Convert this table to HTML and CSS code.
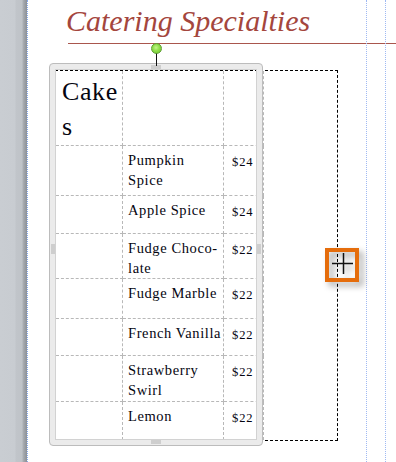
FILE: index.html
```html
<!DOCTYPE html>
<html lang="en">
<head>
<meta charset="utf-8">
<title>Catering Specialties</title>
<link rel="stylesheet" href="styles.css">
</head>
<body>
<div class="app">
  <aside class="gutter"></aside>
  <main class="page">
    <header class="title-wrap">
      <h1 class="title">Catering Specialties</h1>
    </header>
    <div class="rule"></div>

    <div class="textbox">
      <div class="menu">
        <div class="cell head">Cake<br>s</div>
        <div class="cell"></div>
        <div class="cell"></div>

        <div class="cell"></div>
        <div class="cell name">Pumpkin<br>Spice</div>
        <div class="cell price">$24</div>

        <div class="cell"></div>
        <div class="cell name">Apple Spice</div>
        <div class="cell price">$24</div>

        <div class="cell"></div>
        <div class="cell name">Fudge Choco-<br>late</div>
        <div class="cell price">$22</div>

        <div class="cell"></div>
        <div class="cell name">Fudge Marble</div>
        <div class="cell price">$22</div>

        <div class="cell"></div>
        <div class="cell name">French Vanilla</div>
        <div class="cell price">$22</div>

        <div class="cell"></div>
        <div class="cell name">Strawberry<br>Swirl</div>
        <div class="cell price">$22</div>

        <div class="cell last"></div>
        <div class="cell name last">Lemon</div>
        <div class="cell price last">$22</div>
      </div>
    </div>

    <div class="guide guide-a"></div>
    <div class="guide guide-b"></div>

    <div class="frame">
      <span class="grip grip-top"></span>
      <span class="grip grip-bottom"></span>
      <span class="grip grip-left"></span>
      <span class="grip grip-right"></span>
    </div>
    <div class="stem"></div>
    <div class="knob"></div>

    <div class="cursor-box">
      <svg width="26" height="26" viewBox="0 0 26 26" class="cross">
        <path d="M2 11.5H23M13.5 1V22" stroke="#111111" stroke-width="1.5" fill="none"/>
      </svg>
    </div>
  </main>
</div>
</body>
</html>
```

FILE: styles.css
```css
* { box-sizing: border-box; }

html, body {
  margin: 0;
  padding: 0;
  background: #ffffff;
}

.app {
  display: flex;
  width: 396px;
  height: 462px;
  overflow: hidden;
}

.gutter {
  flex: 0 0 27px;
  background: linear-gradient(to right,
    #c9cdd2 0px, #c8ccd1 15px, #c1c5ca 16px, #bfc3c8 22px,
    #abafb4 23px, #999da3 25px, #8d9197 27px);
}

.page {
  flex: 1;
  position: relative;
  border-left: 1px dotted #86a9ee;
  background: #ffffff;
}

.title-wrap {
  height: 43px;
  padding: 3px 0 0 38px;
}

.title {
  margin: 0;
  font-family: "Liberation Serif", "DejaVu Serif", serif;
  font-style: italic;
  font-weight: normal;
  font-size: 30px;
  line-height: 36px;
  letter-spacing: 0;
  color: #a4463d;
}

.rule {
  height: 1px;
  margin-left: 40px;
  background: #a9564d;
}

.textbox {
  margin: 26px 0 0 27px;
  width: 283px;
  height: 371px;
  border: 1px dashed #000000;
}

.menu {
  display: grid;
  grid-template-columns: 67px 101px 40px;
  grid-template-rows: 75px 50px 38px 45px 40px 37px 46px 38px;
  font-family: "Liberation Serif", "DejaVu Serif", serif;
  color: #050510;
}

.cell {
  border-right: 1px dashed #b8b8b8;
  border-bottom: 1px dashed #b8b8b8;
}

.cell.last {
  border-bottom: none;
}

.head {
  font-size: 26px;
  line-height: 35px;
  letter-spacing: 0.6px;
  padding: 3px 0 0 6px;
}

.name {
  font-size: 14.5px;
  line-height: 20px;
  letter-spacing: 0.6px;
  white-space: nowrap;
  padding: 4px 0 0 5px;
}

.price {
  font-size: 12.5px;
  line-height: 20px;
  letter-spacing: 0.9px;
  padding: 6px 0 0 8px;
}

.guide {
  position: absolute;
  top: 0;
  bottom: 0;
  width: 0;
  border-left: 1px dotted #9fb9f3;
}
.guide-a { left: 338px; }
.guide-b { left: 357px; }

.frame {
  position: absolute;
  left: 21px;
  top: 63px;
  width: 214px;
  height: 383px;
  border: 1px solid #bcbcbc;
  border-radius: 4px;
  box-shadow: inset 0 0 0 5px #ebebeb, inset 0 0 0 6px #d2d2d2;
}

.grip {
  position: absolute;
  background-image: radial-gradient(circle, #cdcdcd 0.7px, transparent 1px);
  background-size: 2px 2px;
}
.grip-top { left: 101px; top: 1px; width: 10px; height: 4px; }
.grip-bottom { left: 101px; bottom: 1px; width: 10px; height: 4px; }
.grip-left { left: 1px; top: 180px; width: 4px; height: 10px; }
.grip-right { right: 1px; top: 180px; width: 4px; height: 10px; }

.stem {
  position: absolute;
  left: 128px;
  top: 53px;
  width: 1px;
  height: 13px;
  background: #111111;
}

.knob {
  position: absolute;
  left: 123px;
  top: 43px;
  width: 11px;
  height: 11px;
  border-radius: 50%;
  border: 1px solid #5f9c35;
  background: radial-gradient(circle at 45% 40%, #c3f58a 0%, #8fde4a 45%, #6cc42c 100%);
}

.cursor-box {
  position: absolute;
  left: 297px;
  top: 248px;
  width: 34px;
  height: 34px;
  border: 4px solid #e56d0c;
  filter: drop-shadow(4px 4px 3px rgba(0, 0, 0, 0.35));
}

.cross {
  display: block;
  margin: 0 0 0 1px;
}
```
